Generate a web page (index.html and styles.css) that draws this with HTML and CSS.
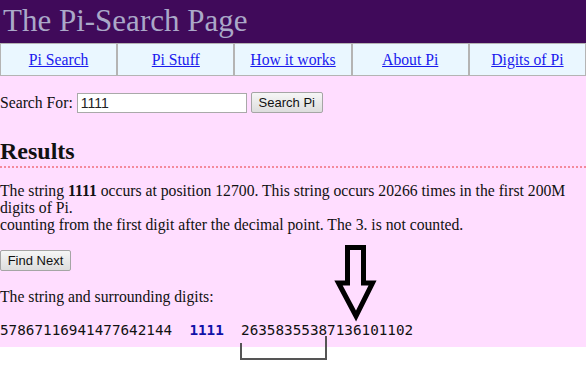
FILE: index.html
```html
<!DOCTYPE html>
<html lang="en">
<head>
    <meta charset="UTF-8">
    <meta name="viewport" content="width=device-width, initial-scale=1.0">
    <title>The Pi-Search Page</title>
    <link rel="stylesheet" href="styles.css">
</head>
<body>
    <div class="header">
        <h1>The Pi-Search Page</h1>
    </div>

    <div class="nav">
        <div class="nav-cell"><a href="#">Pi Search</a></div>
        <div class="nav-cell"><a href="#">Pi Stuff</a></div>
        <div class="nav-cell"><a href="#">How it works</a></div>
        <div class="nav-cell"><a href="#">About Pi</a></div>
        <div class="nav-cell"><a href="#">Digits of Pi</a></div>
    </div>

    <div class="main">
        <form class="search" onsubmit="event.preventDefault();">
            <label for="query">Search For:</label>
            <input type="text" id="query" value="1111">
            <button type="submit">Search Pi</button>
        </form>

        <h2>Results</h2>

        <p class="result">The string <b>1111</b> occurs at position 12700. This string occurs 20266 times in the first 200M<br>digits of Pi.<br>counting from the first digit after the decimal point. The 3. is not counted.</p>

        <button type="button" class="next">Find Next</button>

        <p class="result surround">The string and surrounding digits:</p>

        <p class="digits">57867116941477642144&nbsp; <span class="hit">1111</span> &nbsp;26358355387136101102</p>
    </div>

    <!-- annotation: arrow and bracket drawn over the page -->
    <svg class="arrow" width="44" height="80" viewBox="0 0 44 80">
        <polygon points="13.5,4.5 29.5,4.5 29.5,40 38.5,40 22,73 4.5,40 13.5,40" fill="none" stroke="#000" stroke-width="5" stroke-linejoin="miter"/>
    </svg>
    <svg class="bracket" width="92" height="28" viewBox="0 0 92 28">
        <polyline points="2,7 2,23 87,23 87,0" fill="none" stroke="#555" stroke-width="2"/>
    </svg>
</body>
</html>
```

FILE: styles.css
```css
/* General Styles */
* {
    margin: 0;
    padding: 0;
    box-sizing: border-box;
}

html, body {
    min-height: 100%;
}

body {
    position: relative;
    min-height: 378px;
    background-color: white;
    font-family: "Liberation Serif", "Times New Roman", serif;
    font-size: 15.7px;
    color: #111;
}

.header {
    background-color: #400a5a;
    height: 43px;
    padding: 4px 0 0 3px;
}

.header h1 {
    font-weight: normal;
    font-size: 31px;
    line-height: 34px;
    color: #aaa8c8;
}

/* Navigation */
.nav {
    display: flex;
    background-color: #eaf7ff;
    border-top: 1px solid #b4b4b4;
    border-bottom: 1px solid #b4b4b4;
    height: 33px;
}

.nav-cell {
    flex: 1;
    display: flex;
    align-items: center;
    justify-content: center;
    border-left: 1px solid #b4b4b4;
    border-right: 1px solid #b4b4b4;
}

.nav-cell a {
    color: #1a1aee;
    font-size: 15.7px;
}

/* Main area */
.main {
    background-color: #ffddff;
    padding: 16px 0 9px 0;
}

.search {
    display: flex;
    align-items: center;
}

.search label {
    margin-right: 4px;
}

.search input {
    width: 170px;
    height: 20px;
    border: 1px solid #a9a9a9;
    padding: 0 3px;
    font-family: "Liberation Sans", Arial, sans-serif;
    font-size: 14px;
    color: #222;
    margin-right: 4px;
}

button {
    font-family: "Liberation Sans", Arial, sans-serif;
    font-size: 13px;
    color: #111;
    background: linear-gradient(#f6f6f6, #dddddd);
    border: 1px solid #a5a5a5;
    border-radius: 2px;
    height: 21px;
    padding: 0 6px;
}

.search button {
    width: 72px;
}

h2 {
    font-size: 24px;
    margin-top: 26px;
    padding-bottom: 3px;
    border-bottom: 2px dotted #f48a9c;
    line-height: 24px;
}

.result {
    line-height: 17px;
    margin-top: 14px;
}

.next {
    margin-top: 17px;
    width: 71px;
    height: 21px;
}

.surround {
    margin-top: 17px;
}

.digits {
    font-family: "DejaVu Sans Mono", "Liberation Mono", monospace;
    font-size: 14.3px;
    margin-top: 17px;
    white-space: nowrap;
}

.hit {
    color: #1010a8;
    font-weight: bold;
}

/* Annotations */
.arrow {
    position: absolute;
    left: 334px;
    top: 243px;
}

.bracket {
    position: absolute;
    left: 239px;
    top: 336px;
}
```
